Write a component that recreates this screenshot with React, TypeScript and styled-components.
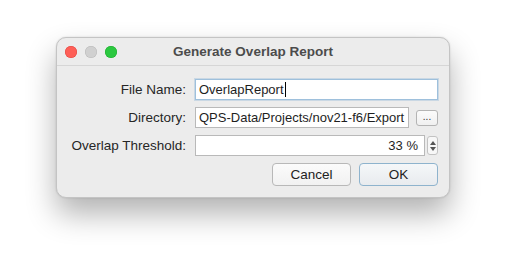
import React from 'react';
import styled, {createGlobalStyle} from 'styled-components';

const GlobalStyle = createGlobalStyle`
    html, body {
        margin: 0;
        padding: 0;
        background: #ffffff;
        font-family: "Liberation Sans", Arial, sans-serif;
    }
`;

const Page = styled.div`
    width: 506px;
    height: 273px;
    padding-top: 37px;
    box-sizing: border-box;
    display: flex;
    justify-content: center;
    align-items: flex-start;
`;

const Window = styled.div`
    width: 394px;
    height: 161px;
    box-sizing: border-box;
    background: #ececec;
    border: 1px solid #c4c4c4;
    border-radius: 10px;
    box-shadow: 0 16px 30px rgba(0, 0, 0, 0.3), 0 0 2px rgba(0, 0, 0, 0.15);
    display: flex;
    flex-direction: column;
    overflow: hidden;
`;

const TitleBar = styled.div`
    height: 28px;
    flex: none;
    position: relative;
    display: flex;
    align-items: center;
    justify-content: center;
    border-bottom: 1px solid #d6d6d6;
    box-sizing: border-box;
`;

const Lights = styled.div`
    position: absolute;
    left: 8px;
    top: 8px;
    display: flex;
    gap: 8px;
`;

const Light = styled.span<{ color: string; edge: string }>`
    width: 12px;
    height: 12px;
    border-radius: 50%;
    background: ${props => props.color};
    box-shadow: inset 0 0 0 0.5px ${props => props.edge};
`;

const Title = styled.div`
    font-size: 13.5px;
    font-weight: bold;
    color: #4c4c4c;
`;

const Body = styled.div`
    padding: 13px 11px 0 0;
    display: grid;
    grid-template-columns: 129px 1fr;
    column-gap: 9px;
    row-gap: 7px;
    align-items: center;
`;

const Label = styled.label`
    font-size: 13.5px;
    color: #262626;
    text-align: right;
`;

const Field = styled.div<{ focused?: boolean }>`
    height: 21px;
    box-sizing: border-box;
    background: #ffffff;
    border: 1px solid ${props => props.focused ? '#9ec0dc' : '#b9b9b9'};
    box-shadow: ${props => props.focused ? '0 0 0 1px rgba(140, 180, 215, 0.35)' : 'none'};
    display: flex;
    align-items: center;
    padding: 0 3px;
    font-size: 13px;
    color: #1e1e1e;
    white-space: nowrap;
    overflow: hidden;
    flex: 1;
`;

const Caret = styled.span`
    display: inline-block;
    width: 1px;
    height: 15px;
    background: #000;
    margin-left: 1px;
`;

const Row = styled.div<{ tight?: boolean }>`
    display: flex;
    align-items: center;
    gap: ${props => props.tight ? '2px' : '7px'};
`;

const SmallButton = styled.div`
    width: 22px;
    height: 16px;
    box-sizing: border-box;
    border: 1px solid #b4b4b4;
    border-radius: 3px;
    background: linear-gradient(#fbfbfb, #f0f0f0);
    font-size: 10px;
    color: #333;
    display: flex;
    align-items: center;
    justify-content: center;
    padding-bottom: 3px;
`;

const NumberField = styled(Field)`
    justify-content: flex-end;
    padding-right: 6px;
`;

const Stepper = styled.div`
    width: 11px;
    height: 19px;
    box-sizing: border-box;
    border: 1px solid #c2c2c2;
    border-radius: 3px;
    background: #f7f7f7;
    display: flex;
    flex-direction: column;
    align-items: center;
    justify-content: center;
    gap: 2px;
`;

const Arrow = styled.span<{ up?: boolean }>`
    width: 0;
    height: 0;
    border-left: 3px solid transparent;
    border-right: 3px solid transparent;
    ${props => props.up ? 'border-bottom: 4px solid #555;' : 'border-top: 4px solid #555;'}
`;

const Footer = styled.div`
    grid-column: 2;
    display: flex;
    justify-content: flex-end;
    gap: 8px;
`;

const DialogButton = styled.div<{ primary?: boolean }>`
    width: 79px;
    height: 23px;
    box-sizing: border-box;
    border: 1px solid ${props => props.primary ? '#8eb3cd' : '#b8b8b8'};
    border-radius: 4px;
    background: ${props => props.primary ? 'linear-gradient(#f5f7f9, #e8ebee)' : 'linear-gradient(#fbfbfb, #f1f1f1)'};
    font-size: 13.5px;
    color: #222;
    display: flex;
    align-items: center;
    justify-content: center;
`;

const App: React.FC = () => {
    return (
        <>
            <GlobalStyle/>
            <Page>
                <Window>
                    <TitleBar>
                        <Lights>
                            <Light color="#fe5f57" edge="#e0443e"/>
                            <Light color="#d0d0d0" edge="#b8b8b8"/>
                            <Light color="#2bc840" edge="#1aab29"/>
                        </Lights>
                        <Title>Generate Overlap Report</Title>
                    </TitleBar>
                    <Body>
                        <Label>File Name:</Label>
                        <Field focused>OverlapReport<Caret/></Field>

                        <Label>Directory:</Label>
                        <Row>
                            <Field>QPS-Data/Projects/nov21-f6/Export</Field>
                            <SmallButton>...</SmallButton>
                        </Row>

                        <Label>Overlap Threshold:</Label>
                        <Row tight>
                            <NumberField>33 %</NumberField>
                            <Stepper>
                                <Arrow up/>
                                <Arrow/>
                            </Stepper>
                        </Row>

                        <Footer>
                            <DialogButton>Cancel</DialogButton>
                            <DialogButton primary>OK</DialogButton>
                        </Footer>
                    </Body>
                </Window>
            </Page>
        </>
    );
};

export default App;
